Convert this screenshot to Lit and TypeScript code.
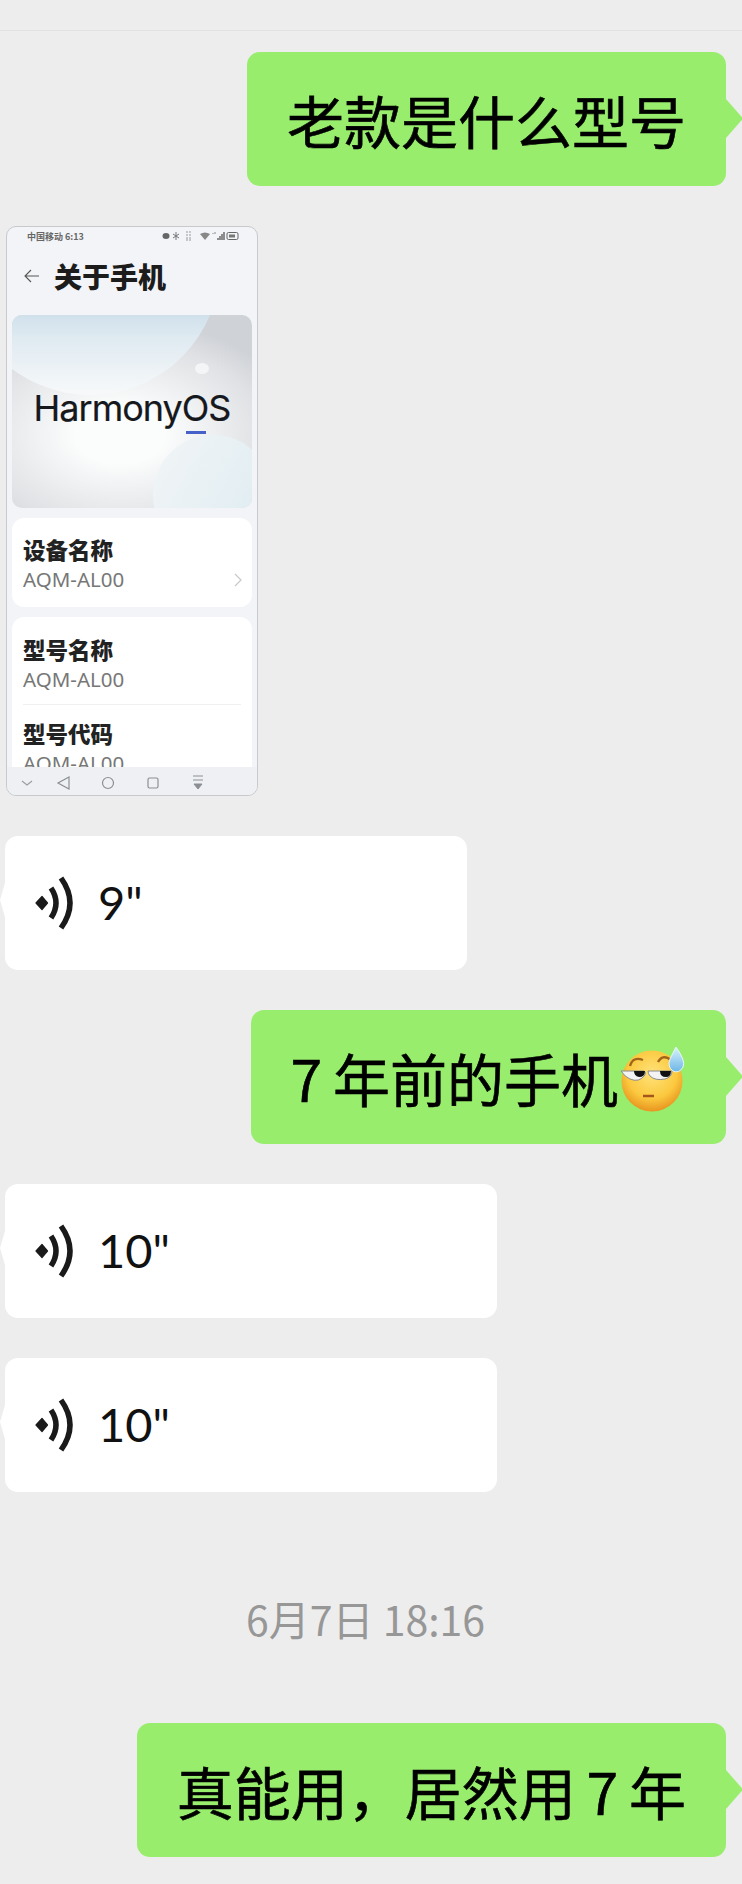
import { LitElement, html, css, svg } from "lit";
import { customElement } from "lit/decorators.js";

const voice = html`<svg class="wave" viewBox="0 0 40 56" aria-hidden="true">
  <path d="M1 28 L7 21.500 L12.500 28 L7 34.500 Z" fill="#1a1a1a" stroke="#1a1a1a" stroke-width="1.2" stroke-linejoin="round"/>
  <path d="M16 13 Q26 28 16 43" fill="none" stroke="#1a1a1a" stroke-width="5.5"/>
  <path d="M26 3 Q44 28 26 53" fill="none" stroke="#1a1a1a" stroke-width="5.5"/>
</svg>`;

const emoji = html`<svg class="emoji" viewBox="0 0 66 66" aria-hidden="true">
  <defs>
    <radialGradient id="face" cx="50%" cy="38%" r="62%">
      <stop offset="0" stop-color="#ffe27a"/><stop offset=".65" stop-color="#fbc93f"/><stop offset="1" stop-color="#e8951f"/>
    </radialGradient>
    <linearGradient id="drop" x1="0" y1="0" x2="0" y2="1">
      <stop offset="0" stop-color="#d8f2fc"/><stop offset="1" stop-color="#6db6e6"/>
    </linearGradient>
  </defs>
  <circle cx="33" cy="35" r="30.500" fill="url(#face)"/>
  <path d="M11 20 Q14 10 24 14 M39 16 Q44 7 53 15" fill="none" stroke="#a0651a" stroke-width="2.4"/>
  <path d="M2 25 H25 Q27 25 26 29 Q20 37 11 33 Q6 31 2 25Z" fill="#f3f3f3" stroke="#8a8a8a" stroke-width="1"/>
  <path d="M15 25 H26 Q26 31 20 31 Q15 30 15 25Z" fill="#111"/>
  <path d="M29 25 H53 Q53 31 46 33 Q36 35 31 30 Q29 28 29 25Z" fill="#f3f3f3" stroke="#8a8a8a" stroke-width="1"/>
  <path d="M41 25 H52 Q52 31 47 31 Q41 31 41 25Z" fill="#111"/>
  <path d="M24 50 H35" stroke="#a5561b" stroke-width="2.5"/>
  <path d="M57 1 Q67 15 64 21 Q60 28 54 25 Q48 21 51 13 Z" fill="url(#drop)" stroke="#e8f6fc" stroke-width="1"/>
</svg>`;

const navIcons = svg`
  <path d="M6 6 L11 10 L16 6" fill="none" stroke="#9a9ea3" stroke-width="1.2"/>
  <path d="M53 2 L42 8 L53 14 Z" fill="none" stroke="#8b8f94" stroke-width="1.2"/>
  <circle cx="92" cy="8" r="5.5" fill="none" stroke="#8b8f94" stroke-width="1.2"/>
  <rect x="132" y="3" width="10" height="10" rx="1.500" fill="none" stroke="#8b8f94" stroke-width="1.2"/>
  <path d="M177 1 H187 M177 5 H187 M178 9 L182 14 L186 9Z" fill="#8b8f94" stroke="#8b8f94" stroke-width="1"/>
`;

const statusIcons = svg`
  <ellipse cx="4" cy="5" rx="3.500" ry="3" fill="#666"/>
  <path d="M14 1 V9 M11 3 L17 7 M17 3 L11 7" stroke="#777" stroke-width="1"/>
  <path d="M24 1 H30 M24 4 H30 M24 7 H30 M24 9 H30" stroke="#999" stroke-width="1" stroke-dasharray="2 1"/>
  <path d="M38 3 Q43 0 48 3 L43 9 Z" fill="#888"/>
  <path d="M51 2 V3 M53 1 V3" stroke="#888" stroke-width="1"/>
  <path d="M56 9 V7 M58 9 V5 M60 9 V3 M62 9 V1" stroke="#555" stroke-width="1.300"/>
  <rect x="65" y="1.500" width="11" height="7" rx="1.500" fill="none" stroke="#666" stroke-width="1"/>
  <rect x="67" y="3.500" width="6" height="3" fill="#777"/>
`;

@customElement("app-root")
export class AppRoot extends LitElement {
  static styles = css`
    :host {
      display: block;
      width: 742px;
      height: 1884px;
      overflow: hidden;
      background: #ededed;
      font-family: "Noto Sans CJK SC", "Noto Sans", sans-serif;
      color: #000;
    }
    .top { height: 31px; border-bottom: 1px solid #e2e2e2; box-sizing: border-box; }
    .chat { display: flex; flex-direction: column; gap: 40px; padding: 21px 16px 0 5px; }
    .row { display: flex; }
    .me { justify-content: flex-end; }
    .bubble {
      position: relative; height: 134px; box-sizing: border-box; border-radius: 13px;
      display: flex; align-items: center; font-size: 57px; line-height: 1; white-space: pre;
    }
    .green { background: #98ed6d; padding: 0 40px; word-spacing: -2px; -webkit-text-stroke: 0.6px #000; }
    .green::after {
      content: ""; position: absolute; right: -17px; top: 47px; width: 17px; height: 39px;
      background: #98ed6d; clip-path: polygon(0 0, 100% 50%, 0 100%);
    }
    .white { background: #fff; padding-left: 30px; gap: 23px; }
    .white::before {
      content: ""; position: absolute; left: -5px; top: 47px; width: 5px; height: 34px;
      background: #fff; clip-path: polygon(100% 0, 0 50%, 100% 100%);
    }
    .w9 { width: 462px; }
    .w10 { width: 492px; }
    .wave { width: 40px; height: 56px; flex: none; }
    .dur { font-family: Lato, sans-serif; font-size: 47px; color: #111; margin-top: -2px; }
    .emoji { width: 66px; height: 66px; flex: none; margin: 4px 1px 0 1px; }
    .time {
      text-align: center; font-size: 41px; line-height: 56px; color: #979797; white-space: pre;
      margin: 58px 0 37px;
    }

    .phone {
      width: 252px; height: 570px; box-sizing: border-box; margin-left: 1px; overflow: hidden;
      background: #f2f4f7; border: 1px solid #c7c9cc; border-radius: 10px;
      display: flex; flex-direction: column; padding: 0 5px;
    }
    .status {
      display: flex; justify-content: space-between; align-items: center; height: 18px; flex: none;
      padding: 0 12px 0 15px; font-size: 9px; font-weight: 700; color: #666;
    }
    .status svg { width: 78px; height: 10px; }
    .title {
      display: flex; align-items: center; gap: 14px; height: 62px; margin-bottom: 8px; flex: none;
      padding-left: 12px; font-size: 28px; font-weight: 900; color: #1c1c1c;
    }
    .title svg { width: 16px; height: 14px; }
    .banner {
      position: relative; overflow: hidden; height: 193px; flex: none; border-radius: 10px;
      background: radial-gradient(ellipse 75% 60% at 45% 62%, #fbfcfc 25%, #dfe1e4 80%, #cfd2d7 100%);
      display: flex; align-items: center; justify-content: center;
    }
    .banner .c1 {
      position: absolute; left: -52px; top: -180px; width: 260px; height: 260px; border-radius: 50%;
      background: linear-gradient(180deg, #c5d9e8 62%, #dfeaf1 78%, #f7f9fa 100%);
    }
    .banner .c2 {
      position: absolute; left: 141px; top: 120px; width: 120px; height: 120px; border-radius: 50%;
      background: linear-gradient(120deg, #f2f5f6, #dcebf2);
    }
    .banner .c3 {
      position: absolute; left: 183px; top: 48px; width: 14px; height: 11px; border-radius: 50%; background: #f4f5f6;
    }
    .logo {
      position: relative; font-family: Inter, sans-serif; font-size: 36px; letter-spacing: -1px; line-height: 46px;
      color: #15181c; margin-top: -7px; -webkit-text-stroke: 0.2px #15181c;
    }
    .logo i {
      position: absolute; right: 24px; bottom: -3px; width: 20px; height: 3px; background: #4662c9;
    }
    .card {
      background: #fff; border-radius: 12px; flex: none; box-sizing: border-box; padding: 0 11px;
      display: flex; flex-direction: column; overflow: hidden;
    }
    .c-a { height: 89px; margin-top: 10px; justify-content: center; position: relative; }
    .c-b { height: 150px; margin-top: 10px; padding-top: 16px; border-radius: 12px 12px 0 0; }
    .name { font-size: 22.5px; line-height: 32px; font-weight: 900; color: #222; }
    .val { font-family: "Noto Sans", sans-serif; font-size: 20.5px; line-height: 28px; color: #777; white-space: nowrap; }
    .sep { border-top: 1px solid #eef0f2; margin: 11px 0 12px; }
    .chev { position: absolute; right: 10px; top: 55px; width: 8px; height: 14px; }
    .nav { flex: none; height: 29px; margin: 0 -5px; background: #eef0f3; }
    .nav svg { display: block; margin: 8px 0 0 9px; width: 200px; height: 16px; }
  `;

  render() {
    return html`
      <div class="top"></div>
      <div class="chat">
        <div class="row me"><div class="bubble green">老款是什么型号</div></div>
        <div class="row">
          <div class="phone">
            <div class="status"><span>中国移动 6:13</span><svg viewBox="0 0 78 10" aria-hidden="true">${statusIcons}</svg></div>
            <div class="title">
              <svg viewBox="0 0 16 14"><path d="M7 1 L1 7 L7 13 M1 7 H15" fill="none" stroke="#555" stroke-width="1.1"/></svg>
              <span>关于手机</span>
            </div>
            <div class="banner">
              <div class="c1"></div><div class="c2"></div><div class="c3"></div>
              <div class="logo">HarmonyOS<i></i></div>
            </div>
            <div class="card c-a">
              <div class="name">设备名称</div>
              <div class="val">AQM-AL00</div>
              <svg class="chev" viewBox="0 0 8 14"><path d="M1 1 L7 7 L1 13" fill="none" stroke="#c8c8c8" stroke-width="1.2"/></svg>
            </div>
            <div class="card c-b">
              <div class="name">型号名称</div>
              <div class="val">AQM-AL00</div>
              <div class="sep"></div>
              <div class="name">型号代码</div>
              <div class="val">AQM-AL00</div>
            </div>
            <div class="nav"><svg viewBox="0 0 200 16">${navIcons}</svg></div>
          </div>
        </div>
        <div class="row"><div class="bubble white w9">${voice}<span class="dur">9"</span></div></div>
        <div class="row me"><div class="bubble green">7 年前的手机${emoji}</div></div>
        <div class="row"><div class="bubble white w10">${voice}<span class="dur">10"</span></div></div>
        <div class="row"><div class="bubble white w10">${voice}<span class="dur">10"</span></div></div>
        <div class="time">6月7日 18:16</div>
        <div class="row me"><div class="bubble green">真能用，居然用 7 年</div></div>
      </div>
    `;
  }
}
